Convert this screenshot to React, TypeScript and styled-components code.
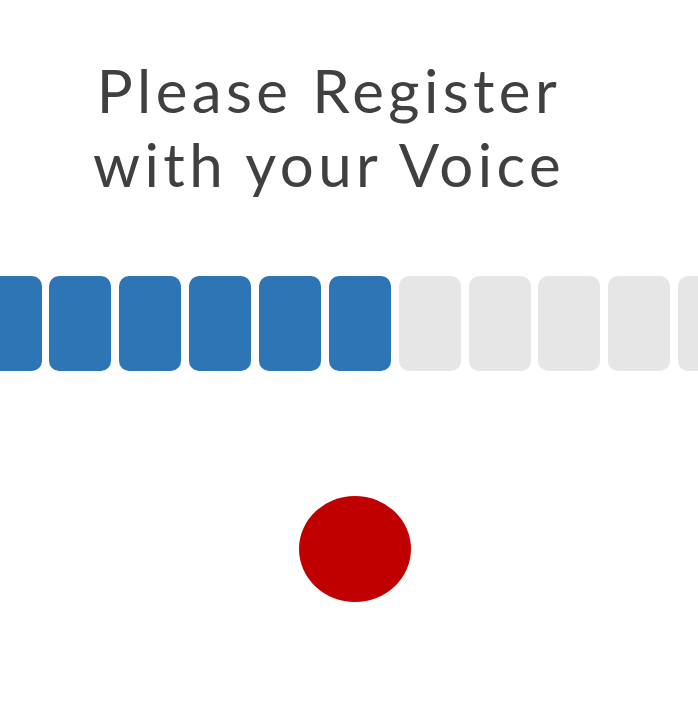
import styled, { createGlobalStyle } from "styled-components";

const TOTAL = 11;
const FILLED = 6;

const App = () => {
  return (
    <Page>
      <GlobalStyle />
      <Title>
        Please Register
        <br />
        with your Voice
      </Title>
      <Meter>
        {Array.from({ length: TOTAL }).map((_, i) => (
          <Block key={i} $filled={i < FILLED} />
        ))}
      </Meter>
      <RecordWrap>
        <RecordDot />
      </RecordWrap>
    </Page>
  );
};

export default App;

const GlobalStyle = createGlobalStyle`
  html, body {
    margin: 0;
    padding: 0;
    background: #ffffff;
  }
`;

const Page = styled.div`
  width: 698px;
  height: 719px;
  overflow: hidden;
  display: flex;
  flex-direction: column;
  background: #ffffff;
`;

const Title = styled.h1`
  margin: 0;
  padding: 53px 40px 0 0;
  text-align: center;
  font-family: "Lato", "DejaVu Sans", sans-serif;
  font-weight: 400;
  font-size: 60px;
  line-height: 74px;
  letter-spacing: 4.4px;
  color: #404040;
  white-space: nowrap;
`;

const Meter = styled.div`
  display: flex;
  gap: 7.87px;
  margin-top: 75px;
  margin-left: -20.5px;
`;

const Block = styled.div<{ $filled: boolean }>`
  flex: 0 0 62px;
  height: 95px;
  border-radius: 10px;
  background: ${(p) => (p.$filled ? "#2e75b6" : "#e7e6e6")};
`;

const RecordWrap = styled.div`
  display: flex;
  justify-content: center;
  padding-left: 11px;
  margin-top: 125px;
`;

const RecordDot = styled.div`
  width: 112px;
  height: 106px;
  border-radius: 50%;
  background: #c00000;
`;
